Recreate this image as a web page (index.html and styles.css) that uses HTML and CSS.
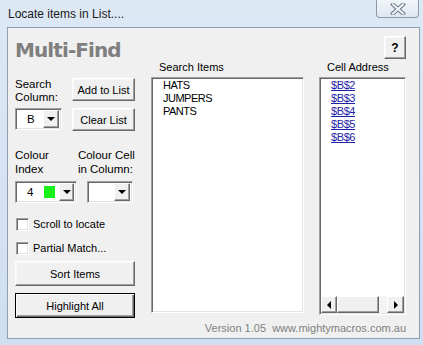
FILE: index.html
```html
<!DOCTYPE html>
<html>
<head>
  <meta charset="utf-8">
  <title>Locate items in List....</title>
  <link rel="stylesheet" href="styles.css">
</head>
<body>
  <div class="window">
    <div class="titlebar">
      <span class="title">Locate items in List....</span>
      <span class="close">
        <svg width="16" height="12" viewBox="0 0 16 12">
          <path d="M3 1.5 L13 10.5 M13 1.5 L3 10.5" stroke="#6f7b8a" stroke-width="4" stroke-linecap="square" fill="none"/>
          <path d="M3 1.5 L13 10.5 M13 1.5 L3 10.5" stroke="#f3f6fa" stroke-width="2" stroke-linecap="square" fill="none"/>
        </svg>
      </span>
    </div>

    <div class="frame">
      <div class="client">

        <!-- left: options and buttons -->
        <div class="col col-left">
          <h1 class="app-title">Multi-Find</h1>

          <div class="row row-search">
            <span class="label">Search<br>Column:</span>
            <span class="btn btn-small">Add to List</span>
          </div>

          <div class="row row-column">
            <span class="combo combo-column">
              <span class="combo-value">B</span>
              <span class="combo-arrow"></span>
            </span>
            <span class="btn btn-small">Clear List</span>
          </div>

          <div class="row row-colour-labels">
            <span class="label label-tall">Colour<br>Index</span>
            <span class="label label-tall label-cell">Colour Cell<br>in Column:</span>
          </div>

          <div class="row row-colour">
            <span class="combo combo-index">
              <span class="combo-value">4</span>
              <span class="swatch"></span>
              <span class="combo-arrow"></span>
            </span>
            <span class="combo combo-cell">
              <span class="combo-value"></span>
              <span class="combo-arrow"></span>
            </span>
          </div>

          <label class="check check-scroll"><span class="check-box"></span>Scroll to locate</label>
          <label class="check check-partial"><span class="check-box"></span>Partial Match...</label>

          <span class="btn btn-wide btn-sort">Sort Items</span>
          <span class="btn btn-wide btn-default">Highlight All</span>
        </div>

        <!-- middle: list of items -->
        <div class="col col-items">
          <div class="list-label">Search Items</div>
          <div class="listbox listbox-items">
            <div class="list-item">HATS</div>
            <div class="list-item">JUMPERS</div>
            <div class="list-item">PANTS</div>
          </div>
        </div>

        <!-- right: found cells -->
        <div class="col col-cells">
          <span class="btn btn-help">?</span>
          <div class="list-label">Cell Address</div>
          <div class="listbox listbox-cells">
            <div class="list-body">
              <a class="cell-link" href="#">$B$2</a>
              <a class="cell-link" href="#">$B$3</a>
              <a class="cell-link" href="#">$B$4</a>
              <a class="cell-link" href="#">$B$5</a>
              <a class="cell-link" href="#">$B$6</a>
            </div>
            <div class="hscroll">
              <span class="scroll-btn"><span class="arrow-left"></span></span>
              <span class="scroll-thumb"></span>
              <span class="scroll-track"></span>
              <span class="scroll-btn scroll-btn-right"><span class="arrow-right"></span></span>
            </div>
          </div>
        </div>

        <div class="version">Version 1.05&nbsp; www.mightymacros.com.au</div>
      </div>
    </div>
  </div>
</body>
</html>
```

FILE: styles.css
```css
body {
  margin: 0;
  background-color: #d3e1f1;
  font-family: "Liberation Sans", Arial, sans-serif;
  color: black;
}

.window {
  display: flex;
  flex-direction: column;
  width: 423px;
  height: 345px;
  background: linear-gradient(#dde8f5, #cfdef0);
}

/* title bar */

.titlebar {
  display: flex;
  justify-content: space-between;
  align-items: flex-start;
  height: 27px;
}

.title {
  padding: 7px 0 0 8px;
  font-size: 12px;
  line-height: 14px;
  color: #1b1b1b;
}

.close {
  display: flex;
  align-items: center;
  justify-content: center;
  box-sizing: border-box;
  width: 43px;
  height: 18px;
  margin-right: 4px;
  border: 1px solid #8d99a8;
  border-top: none;
  border-radius: 0 0 4px 4px;
  background: linear-gradient(#f2f5f9, #dfe7f0);
}

/* window body */

.frame {
  flex: 1;
  display: flex;
  padding: 0 3px 6px 7px;
}

.client {
  position: relative;
  flex: 1;
  display: flex;
  align-items: flex-start;
  gap: 16px;
  padding: 8px 0 0 7px;
  border: 1px solid #8f9fb3;
  background-color: #f0f0f0;
}

.col {
  display: flex;
  flex-direction: column;
}

.col-left {
  width: 120px;
}

.col-items {
  width: 153px;
  padding-top: 25px;
}

.col-cells {
  width: 87px;
  margin-left: -1px;
}

.app-title {
  margin: 2px 0 0;
  height: 24px;
  font-family: "DejaVu Sans", Verdana, sans-serif;
  font-size: 20px;
  line-height: 24px;
  letter-spacing: -0.9px;
  color: #7f7f7f;
}

.row {
  display: flex;
  justify-content: space-between;
  align-items: flex-start;
}

.row-search {
  margin-top: 16px;
}

.row-column {
  margin-top: 4px;
}

.row-colour-labels {
  justify-content: flex-start;
  margin-top: 17px;
}

.row-colour {
  justify-content: flex-start;
  margin-top: 5px;
}

.label {
  flex-shrink: 0;
  font-size: 11.5px;
  line-height: 13px;
  white-space: nowrap;
}

.label-tall {
  line-height: 14px;
}

.label-cell {
  margin-left: 29px;
}

/* classic 3d controls */

.btn {
  display: flex;
  align-items: center;
  justify-content: center;
  box-sizing: border-box;
  border: 1px solid;
  border-color: #ffffff #696969 #696969 #ffffff;
  box-shadow: inset -1px -1px #a0a0a0, inset 1px 1px #f7f7f7;
  background-color: #f0f0f0;
  font-size: 11px;
  cursor: default;
}

.btn-small {
  width: 63px;
  height: 23px;
}

.btn-wide {
  width: 120px;
  height: 25px;
}

.btn-sort {
  margin-top: 6px;
}

.btn-default {
  margin-top: 7px;
  border: 1px solid black;
  box-shadow: inset 1px 1px #ffffff, inset -1px -1px #696969, inset -2px -2px #a0a0a0;
}

.btn-help {
  align-self: flex-end;
  width: 22px;
  height: 23px;
  font-weight: bold;
  font-size: 12px;
}

.combo {
  display: flex;
  align-items: center;
  box-sizing: border-box;
  height: 22px;
  padding: 2px;
  border: 1px solid;
  border-color: #a0a0a0 #ffffff #ffffff #a0a0a0;
  box-shadow: inset 1px 1px #696969, inset -1px -1px #e3e3e3;
  background-color: white;
  font-size: 11.5px;
}

.combo-value {
  flex: 1;
  padding-left: 9px;
}

.combo-column {
  width: 47px;
}

.combo-index {
  width: 62px;
}

.combo-index .combo-value {
  flex: none;
  width: 17px;
}

.combo-cell {
  width: 46px;
  margin-left: 10px;
}

.swatch {
  width: 12px;
  height: 12px;
  margin-right: 4px;
  background-color: #19f019;
}

.combo-arrow {
  position: relative;
  box-sizing: border-box;
  width: 16px;
  height: 18px;
  border: 1px solid;
  border-color: #ffffff #696969 #696969 #ffffff;
  box-shadow: inset -1px -1px #a0a0a0;
  background-color: #f0f0f0;
}

.combo-arrow::after {
  content: "";
  position: absolute;
  left: 3px;
  top: 6px;
  border-style: solid;
  border-width: 4px 4px 0;
  border-color: black transparent transparent;
}

.check {
  display: flex;
  align-items: center;
  height: 13px;
  padding-left: 1px;
  font-size: 11px;
  line-height: 13px;
}

.check-scroll {
  margin-top: 15px;
}

.check-partial {
  margin-top: 11px;
}

.check-box {
  box-sizing: border-box;
  width: 13px;
  height: 13px;
  margin-right: 4px;
  border: 1px solid;
  border-color: #a0a0a0 #ffffff #ffffff #a0a0a0;
  box-shadow: inset 1px 1px #696969, inset -1px -1px #e3e3e3;
  background-color: white;
}

/* list boxes */

.list-label {
  height: 13px;
  margin-bottom: 3px;
  padding-left: 8px;
  font-size: 11px;
  line-height: 13px;
}

.col-cells .list-label {
  margin-top: 2px;
}

.listbox {
  display: flex;
  flex-direction: column;
  box-sizing: border-box;
  border: 1px solid;
  border-color: #a0a0a0 #ffffff #ffffff #a0a0a0;
  box-shadow: inset 1px 1px #696969, inset -1px -1px #e3e3e3;
  background-color: white;
}

.listbox-items {
  height: 236px;
  padding: 1px 0 0 11px;
}

.listbox-cells {
  height: 238px;
  padding: 1px 1px 1px 1px;
}

.list-item {
  font-size: 11px;
  line-height: 13px;
  letter-spacing: -0.5px;
}

.list-body {
  flex: 1;
  display: flex;
  flex-direction: column;
  align-items: flex-start;
  padding-left: 10px;
}

.cell-link {
  font-size: 11px;
  line-height: 13px;
  letter-spacing: -0.4px;
  color: #1d22a8;
}

.hscroll {
  display: flex;
  height: 17px;
  background-color: #f0f0f0;
}

.scroll-btn,
.scroll-thumb {
  display: flex;
  align-items: center;
  justify-content: center;
  box-sizing: border-box;
  width: 16px;
  border: 1px solid;
  border-color: #ffffff #696969 #696969 #ffffff;
  box-shadow: inset -1px -1px #a0a0a0;
  background-color: #f0f0f0;
}

.scroll-btn-right {
  width: 17px;
}

.scroll-thumb {
  width: 42px;
}

.scroll-track {
  flex: 1;
  background-color: #f4f4f4;
}

.arrow-left {
  border-style: solid;
  border-width: 4px 4px 4px 0;
  border-color: transparent black transparent transparent;
}

.arrow-right {
  border-style: solid;
  border-width: 4px 0 4px 4px;
  border-color: transparent transparent transparent black;
}

.version {
  position: absolute;
  right: 13px;
  bottom: 3px;
  font-size: 11px;
  line-height: 13px;
  color: #808080;
}
```
